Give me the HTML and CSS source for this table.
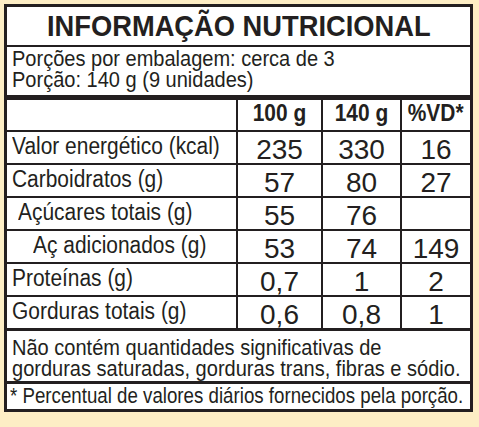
FILE: index.html
```html
<!DOCTYPE html>
<html lang="pt-br">
<head>
    <meta charset="UTF-8">
    <meta name="viewport" content="width=device-width, initial-scale=1.0">
    <title>Informação Nutricional</title>
    <link rel="stylesheet" href="styles.css">
</head>
<body>

<div class="rotulo">
    <div class="titulo">
        <h1 class="estreito">INFORMAÇÃO NUTRICIONAL</h1>
    </div>

    <div class="porcao">
        <p class="estreito">Porções por embalagem: cerca de 3</p>
        <p class="estreito">Porção: 140 g (9 unidades)</p>
    </div>

    <div class="tabela">
        <div class="linha cabecalho">
            <div class="nome"></div>
            <div class="valor"><span class="estreito">100 g</span></div>
            <div class="valor"><span class="estreito">140 g</span></div>
            <div class="valor"><span class="estreito">%VD*</span></div>
        </div>
        <div class="linha">
            <div class="nome"><span class="estreito">Valor energético (kcal)</span></div>
            <div class="valor">235</div>
            <div class="valor">330</div>
            <div class="valor">16</div>
        </div>
        <div class="linha">
            <div class="nome"><span class="estreito">Carboidratos (g)</span></div>
            <div class="valor">57</div>
            <div class="valor">80</div>
            <div class="valor">27</div>
        </div>
        <div class="linha">
            <div class="nome sub"><span class="estreito">Açúcares totais (g)</span></div>
            <div class="valor">55</div>
            <div class="valor">76</div>
            <div class="valor"></div>
        </div>
        <div class="linha">
            <div class="nome sub2"><span class="estreito">Aç adicionados (g)</span></div>
            <div class="valor">53</div>
            <div class="valor">74</div>
            <div class="valor">149</div>
        </div>
        <div class="linha">
            <div class="nome"><span class="estreito">Proteínas (g)</span></div>
            <div class="valor">0,7</div>
            <div class="valor">1</div>
            <div class="valor">2</div>
        </div>
        <div class="linha ultima">
            <div class="nome"><span class="estreito">Gorduras totais (g)</span></div>
            <div class="valor">0,6</div>
            <div class="valor">0,8</div>
            <div class="valor">1</div>
        </div>
    </div>

    <div class="nota">
        <p class="estreito">Não contém quantidades significativas de<br>gorduras saturadas, gorduras trans, fibras e sódio.</p>
    </div>
    <div class="nota rodape">
        <p class="estreito">* Percentual de valores diários fornecidos pela porção.</p>
    </div>
</div>

</body>
</html>
```

FILE: styles.css
```css
body {
    font-family: "Liberation Sans", Arial, sans-serif;
    margin: 0;
    padding: 0;
    background-color: #fdeec5;
    color: #231f20;
}
/* fonte condensada: Liberation Sans estreitada */
.estreito {
    display: inline-block;
    transform: scaleX(0.91);
    transform-origin: left center;
    white-space: nowrap;
}
.rotulo {
    width: 469px;
    box-sizing: border-box;
    margin: 4px 6px 7px 4px;
    border: 3px solid #231f20;
    background-color: #fff;
}
.titulo {
    height: 38px;
    text-align: center;
    border-bottom: 2px solid #231f20;
}
.titulo h1 {
    margin: 0;
    font-size: 30px;
    line-height: 37px;
    font-weight: bold;
    transform-origin: center;
}
.porcao {
    height: 53px;
    box-sizing: border-box;
    padding: 1px 5px 0;
    border-bottom: 5px solid #231f20;
    font-size: 22px;
    line-height: 21px;
}
.porcao p,
.nota p {
    display: block;
    margin: 0;
}
.linha {
    display: grid;
    grid-template-columns: 229px 85px 79px 70px;
    height: 33px;
    box-sizing: border-box;
    border-bottom: 2px solid #231f20;
}
.valor {
    border-left: 2px solid #231f20;
    text-align: center;
    font-size: 28px;
    line-height: 29px;
    padding-top: 3px;
}
.nome {
    font-size: 23px;
    line-height: 29px;
    padding-left: 5px;
}
.sub {
    padding-left: 11px;
}
.sub2 {
    padding-left: 26px;
}
.cabecalho {
    height: 32px;
}
.cabecalho .valor {
    font-size: 23px;
    font-weight: bold;
    line-height: 27px;
    padding-top: 0;
}
.cabecalho .estreito,
.valor .estreito {
    transform-origin: center;
}
.ultima {
    height: 34px;
    border-bottom-width: 3px;
}
.nota {
    height: 53px;
    box-sizing: border-box;
    padding: 6px 5px 0;
    font-size: 22px;
    line-height: 21px;
    border-bottom: 3px solid #231f20;
}
.rodape {
    height: 25px;
    padding: 1px 3px 0;
    border-bottom: none;
}
.rodape p {
    transform: scaleX(0.85);
}
```
